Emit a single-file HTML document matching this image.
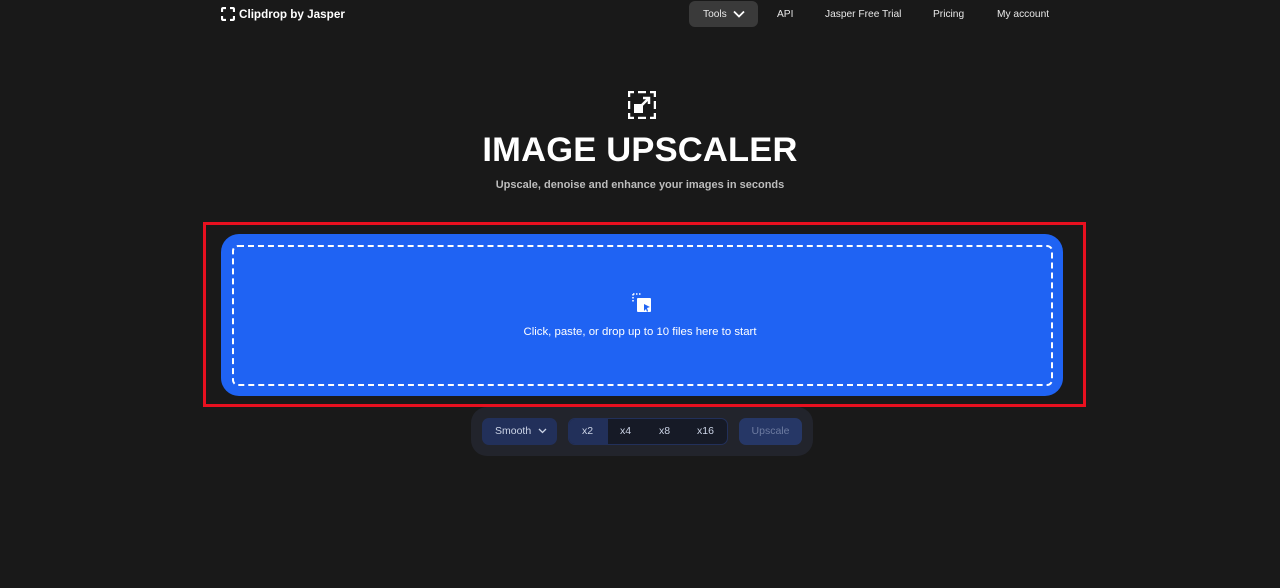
<!DOCTYPE html><html><head><style>
*{margin:0;padding:0;box-sizing:border-box}
body{width:1280px;height:588px;background:#191919;font-family:"Liberation Sans",sans-serif;color:#fff;position:relative;overflow:hidden}
.a{position:absolute}
.nav{font-size:10.2px;color:#e8e8e8;top:9px}
</style></head><body>
<svg class="a" style="left:221px;top:7px" width="14" height="14" viewBox="0 0 14 14" fill="none" stroke="#fff" stroke-width="2.2"><path d="M1 5V2.5Q1 1 2.5 1H5M9 1h2.5Q13 1 13 2.5V5M13 9v2.5q0 1.5-1.5 1.5H9M5 13H2.5Q1 13 1 11.5V9"/></svg>
<div class="a" style="left:239px;top:8px;font-size:11.7px;font-weight:bold">Clipdrop by Jasper</div>
<div class="a" style="left:689px;top:1px;width:69px;height:26px;background:#3a3a3a;border-radius:6px"></div>
<div class="a nav" style="left:703px">Tools</div>
<svg class="a" style="left:733px;top:10px" width="12" height="8" viewBox="0 0 12 8" fill="none" stroke="#fff" stroke-width="1.8"><path d="M1 1.5l5 5 5-5"/></svg>
<div class="a nav" style="left:777px">API</div>
<div class="a nav" style="left:825px">Jasper Free Trial</div>
<div class="a nav" style="left:933px">Pricing</div>
<div class="a nav" style="left:997px">My account</div>
<svg class="a" style="left:628px;top:91px" width="28" height="28" viewBox="0 0 28 28" fill="none" stroke="#fff" stroke-width="2.5"><path d="M1 6V1h5M10 1h8M22 1h5v5M27 10v8M27 22v5h-5M18 27h-8M6 27H1v-5M1 18v-8"/><rect x="6" y="13" width="9" height="9" fill="#fff" stroke="none"/><path d="M13 15l8-8M15 7h6v6"/></svg>
<div class="a" style="left:0;width:1280px;top:131px;text-align:center;font-size:34.5px;font-weight:bold;letter-spacing:0.2px">IMAGE UPSCALER</div>
<div class="a" style="left:0;width:1280px;top:179px;text-align:center;font-size:11px;color:#bdbdbd;font-weight:bold">Upscale, denoise and enhance your images in seconds</div>
<div class="a" style="left:203px;top:222px;width:883px;height:185px;border:3px solid #e8101f"></div>
<div class="a" style="left:221px;top:234px;width:842px;height:162px;background:#1f63f3;border-radius:18px"></div>
<div class="a" style="left:232px;top:245px;width:821px;height:141px;border:2px dashed #fff;border-radius:6px"></div>
<svg class="a" style="left:632px;top:293px" width="20" height="20" viewBox="0 0 20 20"><path d="M1 1h9M1 1v9" stroke="#fff" stroke-width="1.5" stroke-dasharray="1.5 1.5" fill="none"/><rect x="5" y="5" width="14" height="14" rx="1" fill="#fff"/><path d="M12 11l6 3-3 1 1 3-1 1-1-3-2 2z" fill="#1f63f3"/></svg>
<div class="a" style="left:0;width:1280px;top:326px;text-align:center;font-size:11.4px">Click, paste, or drop up to 10 files here to start</div>
<div class="a" style="left:471px;top:407px;width:342px;height:49px;background:#22242c;border-radius:16px"></div>
<div class="a" style="left:482px;top:418px;width:75px;height:27px;background:#22305a;border-radius:7px;font-size:10.5px;color:#ccd4e6;padding:7px 0 0 13px">Smooth</div>
<svg class="a" style="left:538px;top:428px" width="9" height="6" viewBox="0 0 9 6" fill="none" stroke="#ccd4e6" stroke-width="1.3"><path d="M1 1l3.5 3.5L8 1"/></svg>
<div class="a" style="left:568px;top:418px;width:160px;height:27px;background:#161a26;border:1px solid #22305a;border-radius:7px;overflow:hidden">
<div class="a" style="left:0;top:0;width:39px;height:27px;background:#22305a"></div></div>
<div class="a" style="left:582px;top:425px;font-size:10.5px;color:#ccd4e6">x2</div>
<div class="a" style="left:620px;top:425px;font-size:10.5px;color:#ccd4e6">x4</div>
<div class="a" style="left:659px;top:425px;font-size:10.5px;color:#ccd4e6">x8</div>
<div class="a" style="left:697px;top:425px;font-size:10.5px;color:#ccd4e6">x16</div>
<div class="a" style="left:739px;top:418px;width:63px;height:27px;background:#263766;border-radius:7px;font-size:10.5px;color:#6d7ba0;text-align:center;padding-top:7px">Upscale</div>
</body></html>
